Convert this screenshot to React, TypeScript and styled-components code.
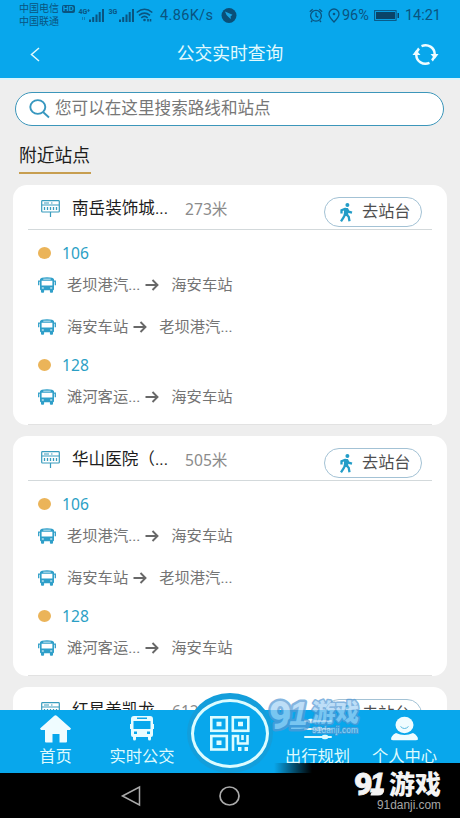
import React from 'react';
import styled, { createGlobalStyle } from 'styled-components';

const Global = createGlobalStyle`
  * { box-sizing: border-box; }
  body { margin: 0; background: #000; font-family: Roboto, "Noto Sans CJK SC", sans-serif; }
  svg { display: block; flex: none; overflow: visible; }
`;

const Phone = styled.div`
  position: relative;
  width: 460px;
  height: 818px;
  overflow: hidden;
  display: flex;
  flex-direction: column;
  background: #000;
`;
const Header = styled.header`
  flex: none;
  height: 80px;
  background: #08a7ec;
  border-bottom: 2px solid #d9f4fd;
`;
const StatusBar = styled.div`
  height: 30px;
  display: flex;
  align-items: center;
  padding: 0 19px;
  color: #0a5480;
  font-size: 14.5px;
  white-space: nowrap;
`;
const Carriers = styled.div`
  width: 60px;
  font-size: 10px;
  line-height: 13px;
  flex: none;
`;
const CarrierLine = styled.div`
  display: flex;
  align-items: center;
  gap: 3px;
  height: 13px;
`;
const HdBadge = styled.span`
  background: #0a5480;
  color: #08a7ec;
  border-radius: 2px;
  font-size: 8px;
  font-weight: 700;
  line-height: 8px;
  height: 8px;
  padding: 0 1px;
`;
const Speed = styled.span`
  margin-left: 7px;
  letter-spacing: 0.35px;
`;
const Grow = styled.div`
  flex: 1;
`;
const StatusValue = styled.span<{ $gap: number }>`
  margin-left: ${p => p.$gap}px;
`;
const TitleBar = styled.div`
  height: 48px;
  display: grid;
  grid-template-columns: 40px 1fr 40px;
  align-items: center;
  padding: 0 15px;
`;
const PageTitle = styled.h1`
  margin: 0;
  text-align: center;
  color: #e2fafd;
  font-size: 17.8px;
  font-weight: 400;
  line-height: 26px;
`;
const BackButton = styled.div`
  padding-left: 15px;
`;
const RefreshButton = styled.div`
  padding-left: 8px;
`;
const Content = styled.main`
  flex: none;
  height: 630px;
  overflow: hidden;
  background: #eeeeee;
  padding: 12px 13px 0;
`;
const SearchBox = styled.div`
  height: 34px;
  margin: 0 3px 0 2px;
  border: 1.4px solid #3c96ba;
  border-radius: 17px;
  background: #fff;
  display: flex;
  align-items: center;
  gap: 5px;
  padding-left: 13px;
  color: #777;
  font-size: 16.6px;
  line-height: 30px;
`;
const SectionTitle = styled.h2`
  width: 72px;
  height: 48px;
  margin: 0 0 11px 6px;
  padding-top: 17px;
  border-bottom: 2.5px solid #c79e50;
  color: #1c1c1c;
  font-size: 17.8px;
  font-weight: 400;
  line-height: 26px;
  white-space: nowrap;
`;
const Card = styled.section`
  height: 240px;
  margin-bottom: 11px;
  padding: 0 15px;
  border-radius: 14px;
  background: #fff;
`;
const CardInner = styled.div`
  height: 240px;
  border-bottom: 1px solid #e2e2e2;
`;
const StationHead = styled.div`
  height: 45px;
  border-bottom: 1px solid #d3d9db;
  display: flex;
  align-items: center;
  padding: 3px 10px 0 13px;
  white-space: nowrap;
`;
const StationName = styled.span`
  margin-left: 12px;
  color: #1d1d1d;
  font-size: 16.6px;
  line-height: 24px;
`;
const Distance = styled.span`
  flex: 1;
  margin-left: 17px;
  color: #8b8b8b;
  font-family: "Noto Sans", "Noto Sans CJK SC", sans-serif;
  font-size: 15.6px;
  line-height: 24px;
`;
const WalkButton = styled.div`
  width: 98px;
  height: 30px;
  margin-top: 6px;
  display: flex;
  align-items: center;
  gap: 9px;
  padding: 1px 0 0 14px;
  border: 1.2px solid #a3c2d5;
  border-radius: 15px;
  color: #4f4f4f;
  font-size: 16.2px;
  line-height: 24px;
`;
const LineNumber = styled.div<{ $top: number }>`
  height: 23px;
  margin-top: ${p => p.$top}px;
  padding-left: 10px;
  display: flex;
  align-items: center;
  gap: 11px;
  color: #2b9fc5;
  font-family: "Noto Sans", sans-serif;
  font-size: 15.6px;
  letter-spacing: 0.1px;
`;
const Dot = styled.i`
  width: 13px;
  height: 12px;
  border-radius: 50%;
  background: #ebb459;
`;
const Direction = styled.div`
  height: 42px;
  padding-left: 10px;
  display: flex;
  align-items: center;
  color: #747474;
  font-size: 15.3px;
  line-height: 22px;
  white-space: nowrap;
`;
const Origin = styled.span`
  margin: 0 5px 0 11px;
`;
const Destination = styled.span`
  margin-left: 12px;
`;
const TabBar = styled.nav`
  position: relative;
  flex: none;
  height: 63px;
  display: grid;
  grid-template-columns: 99px 74px 95px 87px 87px;
  padding-left: 6px;
  background: #08a7ec;
`;
const Tab = styled.div`
  display: flex;
  flex-direction: column;
  align-items: center;
  padding-top: 5px;
  color: #defafd;
  font-size: 16.3px;
  line-height: 24px;
  white-space: nowrap;
`;
const TabIcon = styled.div`
  height: 30px;
`;
const ScanButton = styled.div`
  position: absolute;
  left: 187px;
  top: -17px;
  width: 86px;
  height: 80px;
  border-radius: 50%;
  background: #139edb;
  display: flex;
  align-items: center;
  justify-content: center;
`;
const ScanRing = styled.div`
  width: 78px;
  height: 69px;
  border: 3px solid #dcfcff;
  border-radius: 50%;
  background: #08a7ec;
  display: flex;
  align-items: center;
  justify-content: center;
`;
const SystemNav = styled.footer`
  flex: 1;
  display: flex;
  align-items: center;
  padding-left: 121px;
  gap: 78px;
`;
const CornerShade = styled.div`
  position: absolute;
  left: 274px;
  right: 0;
  top: 763px;
  height: 55px;
  background: linear-gradient(90deg, transparent, #000 38px);
`;
const OverlayMark = styled.div<{ $x: number; $y: number }>`
  position: absolute;
  left: ${p => p.$x}px;
  top: ${p => p.$y}px;
`;

const BusIcon = () => (
  <svg width="18" height="16" viewBox="0 0 18 16">
    <path fill="#2f9fc9" fillRule="evenodd" d="M2 2.200Q2.300.3 9 .2q6.700.1 7 2V12q0 1.200-1 1.200v1.600q0 .9-.9.9h-1.300q-.9 0-.9-.9v-1.500H6.100v1.500q0 .9-.9.9H3.900q-.9 0-.9-.9v-1.600q-1 0-1-1.200zM3.600 3.800V8.500h10.800V3.800zM5.300 1.700v.9h7.400v-.9zM3.800 10.400v1.200h2v-1.200zm8.400 0v1.200h2v-1.200z" />
    <path d="M2 4.200H.7v4M16 4.200h1.300v4" fill="none" stroke="#2f9fc9" strokeWidth="1.300" />
  </svg>
);

const StopIcon = () => (
  <svg width="19" height="17" viewBox="0 0 19 17" fill="none" stroke="#389cbd">
    <rect x=".7" y=".7" width="17.600" height="11.300" rx=".8" strokeWidth="1.200" />
    <path d="M1 5h17M9.500 12V17" strokeWidth="1.200" />
    <path d="M3 3h5M10 3h1.500" strokeWidth="1" />
    <path d="M3.500 7v3M6.500 7v3M9.500 7v3M12.500 7v3M15.500 7v3" strokeWidth="1.300" />
  </svg>
);

const WalkIcon = () => (
  <svg width="14" height="19" viewBox="0 0 14 19">
    <circle cx="8.400" cy="2" r="2" fill="#239dc8" />
    <path d="M7 5.500 6.300 12M6.800 5.600 2.500 7.300V10.500M8 5.700 9.600 8.700l3.400 1M6.300 11 4.700 14.200 2 18.300M7 11l2.700 2.800.8 4.500" fill="none" stroke="#239dc8" strokeWidth="2.300" />
    <path d="M5.300 5h3.600l.4 7H4.700z" fill="#239dc8" />
  </svg>
);

const ArrowIcon = () => (
  <svg width="14" height="12" viewBox="0 0 14 12" fill="none" stroke="#686868" strokeWidth="1.900">
    <path d="M.5 6h12M7.500 1l5 5-5 5" />
  </svg>
);

const Signal = ({ label, data }: { label: string; data?: boolean }) => (
  <svg width="27" height="16" viewBox="0 0 27 16" fill="#0a5480">
    <text x="-.5" y="6.500" fontSize="7" fontWeight="700" fontFamily="Roboto">{label}</text>
    {data && <text x="8" y="4.500" fontSize="6" fontWeight="700" fontFamily="Roboto">+</text>}
    {data && <path d="M3 10h1v3H3zm2 0h1v3H5z" opacity=".5" />}
    <path d="M10 12.500h2V15h-2zM13.200 10h2v5h-2zM16.500 7.500h2V15h-2zM19.700 5h2v10h-2zM23 2h2v13h-2z" />
  </svg>
);

const WifiIcon = () => (
  <svg width="17" height="14" viewBox="0 0 17 14" fill="none" stroke="#0a5480" strokeWidth="1.600">
    <path d="M.7 4.500Q8.500-2 16.300 4.500M3 7.300q5.500-4.500 11 0M5.300 9.800q3.200-2.700 6.400 0" />
    <circle cx="8.500" cy="12" r="1.300" fill="#0a5480" stroke="none" />
    <path d="M12 11v2.500M14.500 11v2.500" />
  </svg>
);

const StatusIcons = () => (
  <svg width="31" height="15" viewBox="0 0 31 15" fill="none" stroke="#0a5480" strokeWidth="1.300">
    <circle cx="7" cy="7.800" r="5.400" />
    <path d="M7 4.500v3.600l2.300 1.300M.8 3.700 3.700 1.200M13.200 3.700l-2.900-2.500M3.300 12.500 2 14M10.700 12.500 12 14" />
    <path d="M25 14Q20 9 20 6a5 5 0 0 1 10 0q0 3-5 8z" />
    <circle cx="25" cy="6" r="1.300" fill="#0a5480" stroke="none" />
  </svg>
);

const QrIcon = () => (
  <svg width="40" height="35" viewBox="0 0 40 35">
    <g fill="none" stroke="#dcfcff" strokeWidth="2.600">
      <rect x="1.300" y="1.300" width="15.500" height="13.500" />
      <rect x="22.800" y="1.300" width="15.500" height="13.500" />
      <rect x="1.300" y="20" width="15.500" height="13.500" />
      <path d="M23 35V20h5v7.500h9.500V19M32.500 19v5" />
    </g>
    <path fill="#dcfcff" d="M6.500 5.800h5v4.500h-5zm21.500 0h5v4.500h-5zM6.500 24.500h5V29h-5zM28 31h3.500v4H28zm6.500 0H38v4h-3.500z" />
  </svg>
);

const Brand = () => (
  <svg width="90" height="40" viewBox="0 0 90 40">
    <g fill="#f4f4f4">
      <text x="-1" y="24" fontFamily="Roboto" fontSize="32" fontWeight="900" stroke="#f4f4f4" strokeWidth=".8">9</text>
      <text x="15" y="20.500" fontFamily="Liberation Sans" fontSize="27" fontWeight="700" fontStyle="italic" stroke="#f4f4f4" strokeWidth=".8">1</text>
      <path d="M15.500 24.500q0-4 5-4.300l8.500-1.200q0 5.500-6 5.500z" />
      <text x="34" y="22.500" fontFamily="Noto Sans CJK SC" fontSize="26" fontWeight="900">游戏</text>
    </g>
    <text x="22" y="37.500" fontFamily="Liberation Sans" fontSize="12" fill="#a6a6a6" textLength="64" lengthAdjust="spacingAndGlyphs">91danji.com</text>
  </svg>
);

const FadedBrand = () => (
  <svg width="92" height="38" viewBox="0 0 92 38" opacity=".72">
    <g fill="#a4d2f4" stroke="#5599d4" strokeWidth="5" strokeLinejoin="round" paintOrder="stroke">
      <text x="0" y="31" fontFamily="Roboto" fontSize="39" fontWeight="900">9</text>
      <path d="M22 31q0-5 6-5.500l11-1q0 6.500-8 6.500z" />
      <text x="20" y="27" fontFamily="Liberation Sans" fontSize="34" fontWeight="700" fontStyle="italic">1</text>
      <text x="43" y="22.500" fontFamily="Noto Sans CJK SC" fontSize="23.500" fontWeight="900" strokeWidth="3">游戏</text>
      <text x="43" y="35" fontFamily="Liberation Sans" fontSize="8.500" strokeWidth="2" fill="#c4ecff" textLength="46">91danji.com</text>
    </g>
  </svg>
);

const Route = ({ from, to }: { from: string; to: string }) => (
  <Direction>
    <BusIcon />
    <Origin>{from}</Origin>
    <ArrowIcon />
    <Destination>{to}</Destination>
  </Direction>
);

const StationCard = ({ name, distance }: { name: string; distance: string }) => (
  <Card>
    <CardInner>
      <StationHead>
        <StopIcon />
        <StationName>{name}</StationName>
        <Distance>{distance}</Distance>
        <WalkButton><WalkIcon />去站台</WalkButton>
      </StationHead>
      <LineNumber $top={11}><Dot />106</LineNumber>
      <Route from="老坝港汽..." to="海安车站" />
      <Route from="海安车站" to="老坝港汽..." />
      <LineNumber $top={5}><Dot />128</LineNumber>
      <Route from="滩河客运..." to="海安车站" />
    </CardInner>
  </Card>
);

const stations = [
  { name: '南岳装饰城...', distance: '273米' },
  { name: '华山医院（...', distance: '505米' },
  { name: '红星美凯龙', distance: '612米' },
];

export default function App() {
  return (
    <Phone>
      <Global />
      <Header>
        <StatusBar>
          <Carriers>
            <CarrierLine>中国电信<HdBadge>HD</HdBadge></CarrierLine>
            <CarrierLine>中国联通</CarrierLine>
          </Carriers>
          <Signal label="4G" data />
          <svg width="3" height="1" />
          <Signal label="3G" />
          <WifiIcon />
          <Speed>4.86K/s</Speed>
          <svg width="24" height="15" viewBox="-8 0 24 15">
            <circle cx="8" cy="7.500" r="7.500" fill="#0a4f78" />
            <path d="m4 3.500 7.500 3.200-2 1.800.5 2.500-1.500-1-3-3z" fill="#18a4e2" />
          </svg>
          <Grow />
          <StatusIcons />
          <StatusValue $gap={2}>96%</StatusValue>
          <svg width="31" height="11" viewBox="-5 0 31 11">
            <rect x=".6" y=".6" width="21.500" height="9.800" fill="none" stroke="#0a5480" />
            <path d="M2 2h19v7H2zM23.500 3H25v5h-1.500z" fill="#0a4468" />
          </svg>
          <StatusValue $gap={5}>14:21</StatusValue>
        </StatusBar>
        <TitleBar>
          <BackButton>
            <svg width="10" height="15" viewBox="0 0 10 15" fill="none" stroke="#e2fafd" strokeWidth="1.500"><path d="M9 1 1.500 7.500 9 14" /></svg>
          </BackButton>
          <PageTitle>公交实时查询</PageTitle>
          <RefreshButton>
            <svg width="25" height="21" viewBox="0 0 25 21" fill="none" stroke="#effcff" strokeWidth="2.500">
              <path d="M8.500 2.200C15-.5 21.500 3.500 21.700 10M16.500 18.800C10 21.500 3.500 17.500 3.300 11M3.300 10.500Q3.500 7 6 4.500M21.700 10.500Q21.500 14 19 16.500" />
              <path d="M-.5 11 3.200 6l4.300 5zM17.500 10h8l-3.700 5z" fill="#effcff" stroke="none" />
            </svg>
          </RefreshButton>
        </TitleBar>
      </Header>
      <Content>
        <SearchBox>
          <svg width="21" height="20" viewBox="0 0 21 20" fill="none" stroke="#3797bf" strokeWidth="1.900">
            <ellipse cx="8.800" cy="8" rx="7.500" ry="6.900" /><path d="m14 13 6 5.500" />
          </svg>
          您可以在这里搜索路线和站点
        </SearchBox>
        <SectionTitle>附近站点</SectionTitle>
        {stations.map(s => <StationCard key={s.name} {...s} />)}
      </Content>
      <TabBar>
        <Tab>
          <TabIcon>
            <svg width="31" height="28" viewBox="0 0 31 28"><path d="M14 1q1.500-1.300 3 0l14 12.500-1 1.500h-3v11.500q0 1-1 1h-6.500V19h-7v8.500H6q-1 0-1-1V15H1l-1-1.500z" fill="#effcff" /></svg>
          </TabIcon>
          首页
        </Tab>
        <Tab>
          <TabIcon>
            <svg width="24" height="26" viewBox="0 0 24 26"><path fillRule="evenodd" d="M4 1h16q3 0 3 3v5h1v5h-1v6q0 2-2 2v2q0 1.500-1.500 1.500T18 24v-2H6v2q0 1.500-1.500 1.500T3 24v-2q-2 0-2-2v-6H0V9h1V4q0-3 3-3zM7 2.500V4h10V2.500zM3.500 6v8h17V6zM4 16.500V19h3v-2.500zm13 0V19h3v-2.500z" fill="#e9fcff" /></svg>
          </TabIcon>
          实时公交
        </Tab>
        <Tab />
        <Tab>
          <TabIcon>
            <svg width="28" height="26" viewBox="0 -4 28 26" stroke="#dcfaff" strokeWidth="2" strokeLinecap="round">
              <path d="M1 2h26M1 10h26M1 18h26" />
              <path d="M6 2h2M14 10h2M20 18h2" strokeWidth="4.500" />
            </svg>
          </TabIcon>
          出行规划
        </Tab>
        <Tab>
          <TabIcon>
            <svg width="27" height="26" viewBox="0 -2 27 26">
              <ellipse cx="13.500" cy="8" rx="9" ry="8.300" fill="#effcff" />
              <path d="M5 16q8.500 4 17 0 5 2.500 5 6.500-1 .8-2 .8H2q-1 0-2-.8Q0 18.500 5 16z" fill="#effcff" />
              <path d="M9.500 9.500q4 4 8 0" stroke="#56b9df" fill="none" />
            </svg>
          </TabIcon>
          个人中心
        </Tab>
        <ScanButton><ScanRing><QrIcon /></ScanRing></ScanButton>
      </TabBar>
      <SystemNav>
        <svg width="20" height="20" viewBox="0 0 20 20" fill="none" stroke="#aaa" strokeWidth="1.500"><path d="M1.500 10 18.500 1v18z" /></svg>
        <svg width="21" height="20" viewBox="0 0 21 20" fill="none" stroke="#aaa" strokeWidth="1.700"><ellipse cx="10.500" cy="10" rx="9.500" ry="9" /></svg>
      </SystemNav>
      <CornerShade />
      <OverlayMark $x={269} $y={698}><FadedBrand /></OverlayMark>
      <OverlayMark $x={355} $y={771}><Brand /></OverlayMark>
    </Phone>
  );
}
